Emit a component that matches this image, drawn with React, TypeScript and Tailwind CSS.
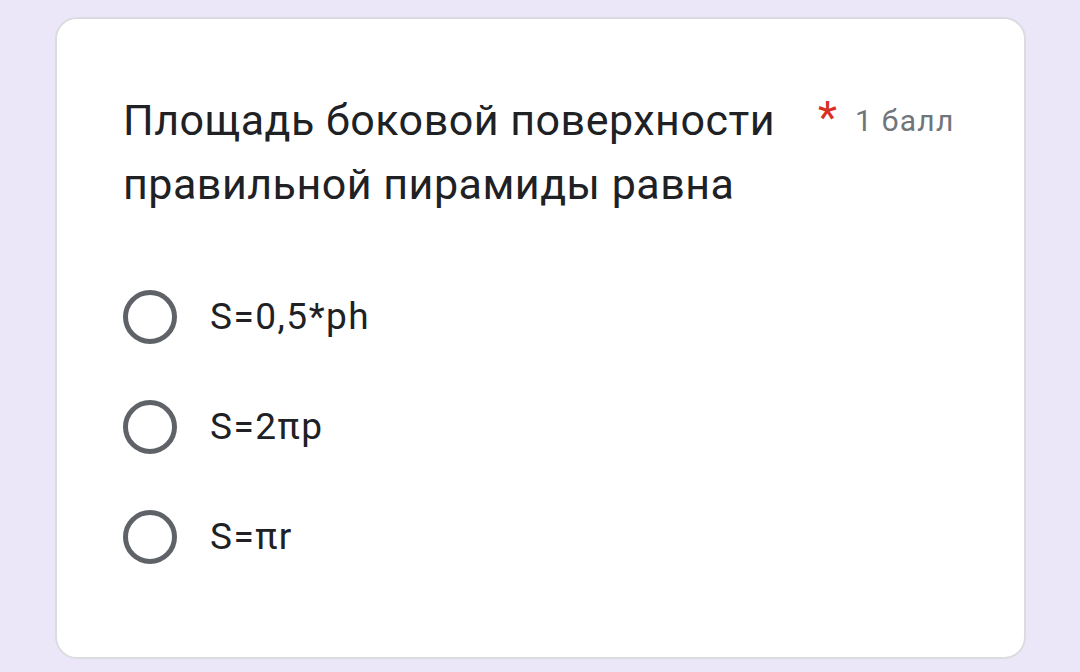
export default function App() {
  const options = ['S=0,5*ph', 'S=2πp', 'S=πr'];

  return (
    <div className="h-[672px] w-[1080px] bg-[#ebe7f8] pt-[17px] pl-[55px] font-['Roboto',sans-serif]">
      <div className="h-[642px] w-[971px] rounded-[22px] border-2 border-[#dadce0] bg-white pl-[66px] pr-[66px] pt-[69px]">
        {/* заголовок вопроса */}
        <div className="flex items-start">
          <div className="w-[690px] text-[43px] leading-[64px] tracking-[0.5px] text-[#202124]">
            Площадь боковой поверхности правильной пирамиды равна
          </div>
          <span className="mt-[8px] ml-[5px] text-[44px] leading-[44px] text-[#d93025]">*</span>
          <span className="ml-[18px] mt-[13px] text-[30px] leading-[40px] tracking-[1.3px] text-[#70757a]">1 балл</span>
        </div>

        {/* варианты ответа */}
        <div className="mt-[74px] flex flex-col gap-[56px]">
          {options.map((o) => (
            <label key={o} className="flex h-[54px] items-center">
              <span className="h-[54px] w-[54px] shrink-0 rounded-full border-[5px] border-[#5f6368]" />
              <span className="ml-[33px] text-[37px] leading-[54px] tracking-[1.5px] text-[#202124]">{o}</span>
            </label>
          ))}
        </div>
      </div>
    </div>
  );
}
